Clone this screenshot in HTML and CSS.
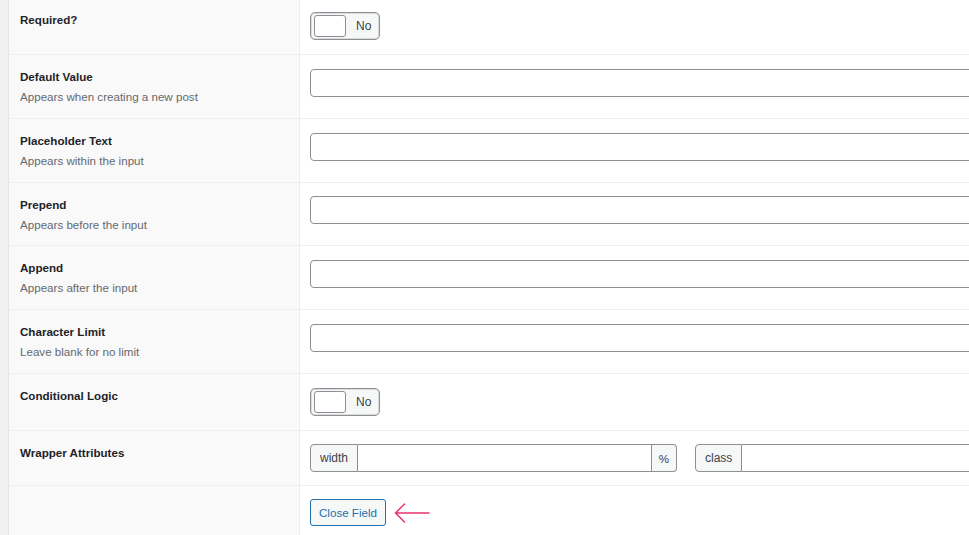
FILE: index.html
```html
<!DOCTYPE html>
<html>
<head>
<meta charset="utf-8">
<link rel="stylesheet" href="styles.css">
</head>
<body>
<div class="page">
  <div class="gutter"></div>
  <div class="fields">
    <div class="row">
      <div class="label"><div class="name">Required?</div></div>
      <div class="input">
        <div class="toggle"><span class="knob"></span><span class="toggle-text">No</span></div>
      </div>
    </div>
    <div class="row">
      <div class="label"><div class="name">Default Value</div><div class="desc">Appears when creating a new post</div></div>
      <div class="input"><div class="text"></div></div>
    </div>
    <div class="row">
      <div class="label"><div class="name">Placeholder Text</div><div class="desc">Appears within the input</div></div>
      <div class="input"><div class="text"></div></div>
    </div>
    <div class="row row-short">
      <div class="label"><div class="name">Prepend</div><div class="desc">Appears before the input</div></div>
      <div class="input"><div class="text"></div></div>
    </div>
    <div class="row">
      <div class="label"><div class="name">Append</div><div class="desc">Appears after the input</div></div>
      <div class="input"><div class="text"></div></div>
    </div>
    <div class="row">
      <div class="label"><div class="name">Character Limit</div><div class="desc">Leave blank for no limit</div></div>
      <div class="input"><div class="text"></div></div>
    </div>
    <div class="row">
      <div class="label"><div class="name">Conditional Logic</div></div>
      <div class="input">
        <div class="toggle"><span class="knob"></span><span class="toggle-text">No</span></div>
      </div>
    </div>
    <div class="row">
      <div class="label"><div class="name">Wrapper Attributes</div></div>
      <div class="input wrap-input">
        <div class="group">
          <span class="addon addon-left">width</span><span class="grow"></span><span class="addon addon-right">%</span>
        </div>
        <div class="group">
          <span class="addon addon-left">class</span><span class="grow"></span>
        </div>
      </div>
    </div>
    <div class="row last">
      <div class="label"></div>
      <div class="input wrap-input">
        <span class="btn">Close Field</span>
        <svg class="arrow" width="36" height="20" viewBox="0 0 36 20">
          <path d="M35 10 H1.5 M10.5 1 L1.5 10 L10.5 19" fill="none" stroke="#e8336b" stroke-width="1.5" stroke-linecap="round" stroke-linejoin="round"/>
        </svg>
      </div>
    </div>
  </div>
</div>
</body>
</html>
```
FILE: styles.css
```css
html, body {
  margin: 0;
  padding: 0;
  overflow: hidden;
  background: #ffffff;
}
body {
  font-family: "Liberation Sans", Arial, sans-serif;
  font-size: 11.6px;
  color: #1d2327;
  width: 969px;
  height: 535px;
}
.page {
  display: flex;
  width: 1600px;
  height: 100%;
}
.gutter {
  width: 8px;
  flex: none;
  background: #f0f0f1;
  border-right: 1px solid #e2e4e7;
}
.fields {
  flex: 1;
  margin-top: -2px;
  display: flex;
  flex-direction: column;
}
.row {
  display: grid;
  grid-template-columns: 291px 1fr;
  border-bottom: 1px solid #eeeeee;
}
.row.last {
  border-bottom: none;
  flex: 1;
}
.label {
  background: #f9f9f9;
  border-right: 1px solid #eeeeee;
  padding: 12px 11px 11px;
}
.row-short .label {
  padding-bottom: 10px;
}
.name {
  font-weight: 700;
  line-height: 20px;
  color: #1d2327;
}
.desc {
  line-height: 20px;
  color: #646970;
}
.input {
  padding: 14px 10px;
  width: 1137px;
}
.row-short .input {
  padding-top: 13px;
}
.wrap-input {
  padding: 13px 10px;
  display: flex;
  align-items: center;
  gap: 18px;
}
.text {
  height: 26px;
  border: 1px solid #8c8f94;
  border-radius: 4px;
  background: #fff;
}
.toggle {
  width: 68px;
  height: 26px;
  border: 1px solid #8c8f94;
  border-radius: 5px;
  background: #f6f7f7;
  box-shadow: inset 0 0 0 1px #dcdcde;
  display: flex;
  align-items: center;
}
.knob {
  width: 30px;
  height: 20px;
  margin-left: 3px;
  background: #fff;
  border: 1px solid #8c8f94;
  border-radius: 3px;
}
.toggle-text {
  margin-left: 10px;
  font-size: 12px;
  color: #3c434a;
}
.group {
  flex: 0 0 367px;
  display: flex;
  height: 28px;
}
.group:last-child {
  flex: 1;
}
.addon {
  display: flex;
  align-items: center;
  padding: 0 9px;
  font-size: 12px;
  background: #f6f7f7;
  border: 1px solid #8c8f94;
  color: #3c434a;
}
.addon-left {
  border-radius: 4px 0 0 4px;
}
.addon-right {
  padding: 0 7px;
  font-size: 11.6px;
  border-radius: 0 4px 4px 0;
  border-left: none;
}
.grow {
  flex: 1;
  border: 1px solid #8c8f94;
  border-left: none;
  background: #fff;
}
.group .grow:last-child {
  border-radius: 0 4px 4px 0;
}
.btn {
  display: inline-flex;
  align-items: center;
  height: 25px;
  padding: 0 8px;
  font-size: 11.6px;
  border: 1px solid #2271b1;
  border-radius: 3px;
  background: #f6f7f7;
  color: #2271b1;
}
.arrow {
  margin-left: -10px;
}
```
